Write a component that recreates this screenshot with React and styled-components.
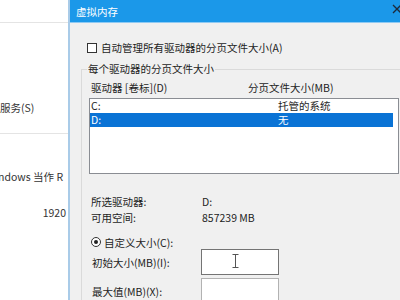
import React from 'react'
import styled, { createGlobalStyle } from 'styled-components'

const GlobalStyle = createGlobalStyle`
    html, body {
        margin: 0;
        padding: 0;
        overflow: hidden;
        background: #fff;
    }
    body {
        font-family: 'Noto Sans CJK SC', 'Noto Sans', sans-serif;
        font-size: 10.5px;
        color: #1e1e1e;
    }
`

const Page = styled.div`
    display: flex;
    width: 400px;
    height: 300px;
    overflow: hidden;
`

/* window behind the dialog */
const BackWindow = styled.div`
    width: 68px;
    flex-shrink: 0;
    background: #fff;
    display: flex;
    flex-direction: column;
    overflow: hidden;
    color: #333;
`

const BackTop = styled.div`
    height: 22px;
    border-bottom: 1px solid #e4e4e4;
`

const BackSection = styled.div`
    height: ${(p) => p.$height || 'auto'};
    padding-top: ${(p) => p.$top}px;
    border-bottom: ${(p) => (p.$line ? '1px solid #e4e4e4' : 'none')};
    box-sizing: border-box;
    display: flex;
    flex-direction: column;
`

const BackText = styled.div`
    line-height: 14px;
    white-space: nowrap;
    text-align: ${(p) => p.$align || 'left'};
    margin-left: ${(p) => p.$shift || 0}px;
    margin-top: ${(p) => p.$gap || 0}px;
    padding-right: 2px;
`

/* virtual memory dialog */
const Dialog = styled.div`
    flex: 1;
    min-width: 0;
    border-left: 2px solid #a9cbe8;
    background: #f0f0f0;
    display: flex;
    flex-direction: column;
`

const TitleBar = styled.div`
    height: 22px;
    flex-shrink: 0;
    background: #1b98e9;
    border-bottom: 1px solid #8fcaf3;
    color: #fff;
    display: flex;
    align-items: center;
    justify-content: space-between;
    padding-left: 6px;
`

const Close = styled.svg`
    margin-right: -2px;
    margin-top: -4px;
`

const Body = styled.div`
    padding: 19px 0 0 11px;
    display: flex;
    flex-direction: column;
`

const CheckRow = styled.label`
    display: flex;
    align-items: center;
    gap: 4px;
    padding-left: 6px;
    height: 12px;
    line-height: 12px;
    white-space: nowrap;
`

const CheckBox = styled.span`
    width: 10px;
    height: 10px;
    box-sizing: border-box;
    border: 1px solid #333;
    background: #fff;
`

const Group = styled.fieldset`
    margin: 8px -20px 0 0;
    padding: 0 0 0 7px;
    border: 1px solid #dadada;
    min-width: 0;
`

const Legend = styled.legend`
    padding: 0 1px;
    margin-left: -2px;
    line-height: 14px;
    white-space: nowrap;
`

const ListHead = styled.div`
    display: grid;
    grid-template-columns: 157px 1fr;
    padding-left: 2px;
    margin-top: 5px;
    line-height: 14px;
    white-space: nowrap;
`

const ListBox = styled.div`
    margin-top: 3px;
    width: 310px;
    height: 76px;
    box-sizing: border-box;
    border: 1px solid #8a8d93;
    background: #fff;
`

const ListRow = styled.div`
    display: grid;
    grid-template-columns: 187px 1fr;
    width: 303px;
    height: 14px;
    line-height: 14px;
    padding-left: 1px;
    box-sizing: border-box;
    background: ${(p) => (p.$selected ? '#0a73d5' : 'transparent')};
    color: ${(p) => (p.$selected ? '#fff' : 'inherit')};
`

const InfoGrid = styled.div`
    display: grid;
    grid-template-columns: 111px 1fr;
    grid-auto-rows: 16px;
    align-items: center;
    padding-left: 2px;
    margin-top: 19px;
    white-space: nowrap;
`

const RadioRow = styled.label`
    display: flex;
    align-items: center;
    gap: 3px;
    padding-left: 2px;
    margin-top: 11px;
    height: 12px;
    white-space: nowrap;
`

const Radio = styled.span`
    width: 10px;
    height: 10px;
    box-sizing: border-box;
    border: 1px solid #333;
    border-radius: 50%;
    background: #fff;
    display: flex;
    align-items: center;
    justify-content: center;

    &::after {
        content: '';
        width: 4px;
        height: 4px;
        border-radius: 50%;
        background: #222;
    }
`

const SizeRow = styled.div`
    display: grid;
    grid-template-columns: 109px 78px;
    align-items: center;
    padding-left: 3px;
    margin-top: ${(p) => p.$gap}px;
    height: 26px;
    white-space: nowrap;
`

const SizeInput = styled.div`
    position: relative;
    height: 26px;
    box-sizing: border-box;
    border: 1px solid ${(p) => (p.$focused ? '#747474' : '#b2b2b2')};
    background: #fff;
`

const Caret = styled.svg`
    position: absolute;
    left: 30px;
    top: 4px;
`

export default function App() {
    return (
        <>
            <GlobalStyle />
            <Page>
                <BackWindow>
                    <BackTop />
                    <BackSection $height="111px" $top={78} $line>
                        <BackText>服务(S)</BackText>
                    </BackSection>
                    <BackSection $top={36}>
                        <BackText $shift={-14}>Windows 当作 R</BackText>
                        <BackText $align="right" $gap={22}>1920</BackText>
                    </BackSection>
                </BackWindow>

                <Dialog>
                    <TitleBar>
                        <span>虚拟内存</span>
                        <Close width="10" height="10" viewBox="0 0 10 10">
                            <path d="M1 1 L9 9 M9 1 L1 9" stroke="#1d2a3a" strokeWidth="1.3" />
                        </Close>
                    </TitleBar>

                    <Body>
                        <CheckRow>
                            <CheckBox />
                            自动管理所有驱动器的分页文件大小(A)
                        </CheckRow>

                        <Group>
                            <Legend>每个驱动器的分页文件大小</Legend>
                            <ListHead>
                                <span>驱动器 [卷标](D)</span>
                                <span>分页文件大小(MB)</span>
                            </ListHead>
                            <ListBox>
                                <ListRow>
                                    <span>C:</span>
                                    <span>托管的系统</span>
                                </ListRow>
                                <ListRow $selected>
                                    <span>D:</span>
                                    <span>无</span>
                                </ListRow>
                            </ListBox>

                            <InfoGrid>
                                <span>所选驱动器:</span>
                                <span>D:</span>
                                <span>可用空间:</span>
                                <span>857239 MB</span>
                            </InfoGrid>

                            <RadioRow>
                                <Radio />
                                自定义大小(C):
                            </RadioRow>

                            <SizeRow $gap={1}>
                                <span>初始大小(MB)(I):</span>
                                <SizeInput $focused>
                                    <Caret width="7" height="14" viewBox="0 0 7 14">
                                        <path d="M0.5 0.5 H6.5 M3.5 0.5 V13.5 M0.5 13.5 H6.5" stroke="#555" strokeWidth="1" fill="none" />
                                    </Caret>
                                </SizeInput>
                            </SizeRow>
                            <SizeRow $gap={3}>
                                <span>最大值(MB)(X):</span>
                                <SizeInput />
                            </SizeRow>
                        </Group>
                    </Body>
                </Dialog>
            </Page>
        </>
    )
}
